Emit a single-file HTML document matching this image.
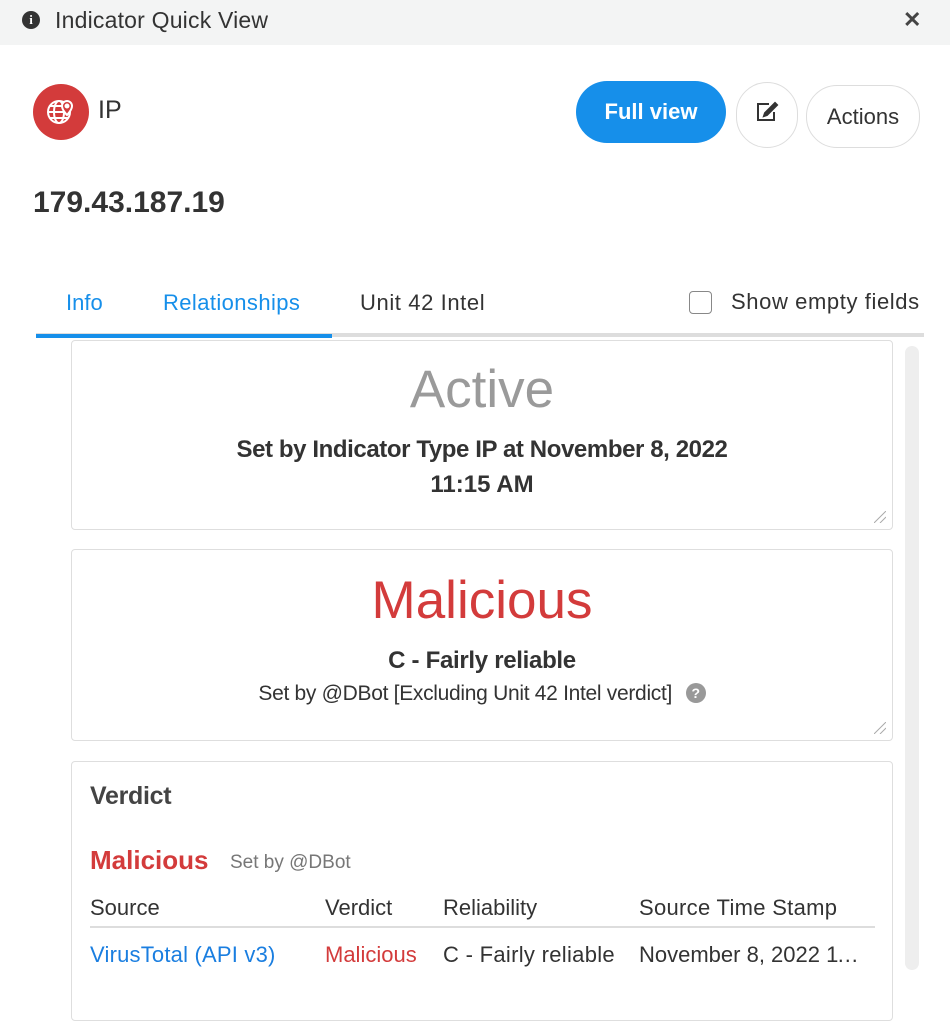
<!DOCTYPE html>
<html><head><style>
*{margin:0;padding:0;box-sizing:border-box}
body{width:950px;height:999px;overflow:hidden;background:#fff;font-family:"Liberation Sans",sans-serif;color:#333;position:relative}
.a{position:absolute;white-space:nowrap}
.card{position:absolute;left:71px;width:822px;border:1px solid #dedede;border-radius:4px;background:#fff}
.c{position:absolute;left:0;width:100%;text-align:center;white-space:nowrap}
.rs{position:absolute;right:6px;bottom:6px;width:12px;height:12px}
</style></head><body>
<div class="a" style="left:0;top:0;width:950px;height:45px;background:#f3f4f4"></div>
<div class="a" style="left:22px;top:11px;width:18px;height:18px;border-radius:50%;background:#333;color:#fff;font:bold 13px 'Liberation Serif',serif;text-align:center;line-height:18px">i</div>
<div class="a" style="left:55px;top:7px;font-size:23px;color:#333;letter-spacing:0.2px">Indicator Quick View</div>
<div class="a" style="left:903px;top:7px;font-size:22px;font-weight:bold;color:#444">✕</div>

<div class="a" style="left:33px;top:84px;width:56px;height:56px;border-radius:50%;background:#d33b3b"></div>
<svg class="a" style="left:46px;top:97px" width="30" height="30" viewBox="0 0 30 30" fill="none" stroke="#fff" stroke-width="2"><circle cx="13" cy="15" r="11"/><ellipse cx="13" cy="15" rx="5" ry="11"/><line x1="2" y1="15" x2="24" y2="15"/><line x1="4" y1="9" x2="22" y2="9"/><line x1="4" y1="21" x2="22" y2="21"/><path d="M21 4a5 5 0 0 1 5 5c0 4-5 9-5 9s-5-5-5-9a5 5 0 0 1 5-5z" fill="#d33b3b"/><circle cx="21" cy="9" r="1.5" fill="#fff"/></svg>
<div class="a" style="left:98px;top:96px;font-size:25px">IP</div>

<div class="a" style="left:576px;top:81px;width:150px;height:62px;border-radius:31px;background:#168fea;color:#fff;font-size:22px;font-weight:bold;text-align:center;line-height:62px">Full view</div>
<div class="a" style="left:736px;top:82px;width:62px;height:66px;border-radius:31px;border:1.5px solid #ddd"></div>
<svg class="a" style="left:755px;top:101px" width="24" height="22" viewBox="0 0 24 22" fill="none" stroke="#333" stroke-width="2"><path d="M14 3H3v16h16v-8"/><path d="M20 2l2 2-10 10-3 1 1-3z" fill="#333"/></svg>
<div class="a" style="left:806px;top:85px;width:114px;height:63px;border-radius:31px;border:1.5px solid #ddd;font-size:22px;text-align:center;line-height:62px">Actions</div>

<div class="a" style="left:33px;top:186px;font-size:30px;font-weight:bold;color:#333">179.43.187.19</div>

<div class="a" style="left:66px;top:290px;font-size:22px;color:#168fea">Info</div>
<div class="a" style="left:163px;top:290px;font-size:22px;color:#168fea;letter-spacing:0.4px">Relationships</div>
<div class="a" style="left:360px;top:290px;font-size:22px;color:#333;letter-spacing:0.6px">Unit 42 Intel</div>
<div class="a" style="left:689px;top:291px;width:23px;height:23px;border:1.5px solid #888;border-radius:4px"></div>
<div class="a" style="left:731px;top:289px;font-size:22px;letter-spacing:0.6px">Show empty fields</div>
<div class="a" style="left:36px;top:333px;width:888px;height:4px;background:#ddd"></div>
<div class="a" style="left:36px;top:334px;width:296px;height:4px;background:#168fea"></div>

<div class="a" style="left:905px;top:346px;width:14px;height:624px;border-radius:7px;background:#eeeeee"></div>

<div class="card" style="top:340px;height:190px">
<div class="c" style="top:18px;font-size:53px;color:#9a9a9a">Active</div>
<div class="c" style="top:95px;font-size:24px;font-weight:bold;letter-spacing:-0.4px">Set by Indicator Type IP at November 8, 2022</div>
<div class="c" style="top:130px;font-size:24px;font-weight:bold">11:15 AM</div>
<svg class="rs" viewBox="0 0 12 12" stroke="#aaa"><line x1="0" y1="12" x2="12" y2="0"/><line x1="6" y1="12" x2="12" y2="6"/></svg>
</div>

<div class="card" style="top:549px;height:192px">
<div class="c" style="top:20px;font-size:53px;color:#d33b3b">Malicious</div>
<div class="c" style="top:97px;font-size:24px;font-weight:bold;letter-spacing:-0.3px">C - Fairly reliable</div>
<div class="c" style="top:132px;font-size:21px;letter-spacing:-0.3px">Set by @DBot [Excluding Unit 42 Intel verdict] <span style="display:inline-block;width:20px;height:20px;border-radius:50%;background:#999;color:#fff;font-size:14px;font-weight:bold;line-height:20px;vertical-align:2px;margin-left:8px">?</span></div>
<svg class="rs" viewBox="0 0 12 12" stroke="#aaa"><line x1="0" y1="12" x2="12" y2="0"/><line x1="6" y1="12" x2="12" y2="6"/></svg>
</div>

<div class="card" style="top:761px;height:260px"></div>
<div class="a" style="left:90px;top:782px;font-size:25px;font-weight:bold;color:#444;letter-spacing:-0.3px">Verdict</div>
<div class="a" style="left:90px;top:845px;font-size:26px;font-weight:bold;color:#d33b3b">Malicious</div>
<div class="a" style="left:230px;top:852px;font-size:19px;color:#777">Set by @DBot</div>
<div class="a" style="left:90px;top:895px;font-size:22px">Source</div>
<div class="a" style="left:325px;top:895px;font-size:22px">Verdict</div>
<div class="a" style="left:443px;top:895px;font-size:22px">Reliability</div>
<div class="a" style="left:639px;top:895px;font-size:22px;letter-spacing:0.3px">Source Time Stamp</div>
<div class="a" style="left:90px;top:926px;width:785px;height:2px;background:#ddd"></div>
<div class="a" style="left:90px;top:942px;font-size:22px;color:#1a7ee0;letter-spacing:0.2px">VirusTotal (API v3)</div>
<div class="a" style="left:325px;top:942px;font-size:22px;color:#d33b3b">Malicious</div>
<div class="a" style="left:443px;top:942px;font-size:22px;letter-spacing:0.3px">C - Fairly reliable</div>
<div class="a" style="left:639px;top:942px;font-size:22px;width:220px;overflow:hidden;text-overflow:ellipsis">November 8, 2022 11:15 AM</div>
</body></html>
